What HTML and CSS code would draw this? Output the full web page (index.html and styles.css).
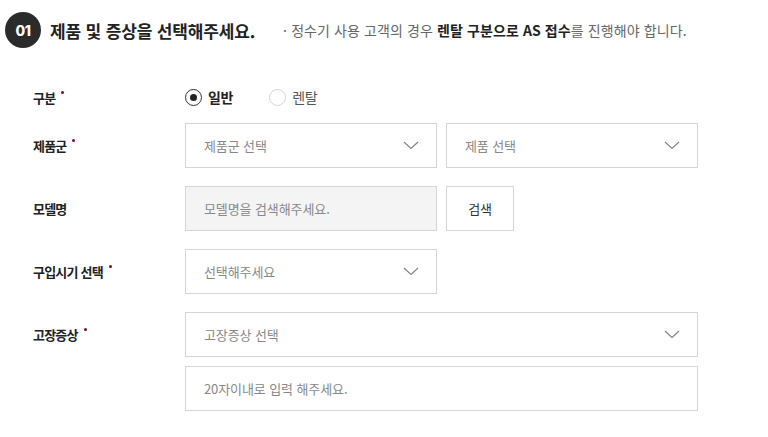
FILE: index.html
```html
<!DOCTYPE html>
<html lang="ko">
<head>
<meta charset="utf-8">
<title>제품 및 증상 선택</title>
<link rel="stylesheet" href="styles.css">
</head>
<body>
<div class="page">
  <div class="head">
    <span class="badge">01</span>
    <h2 class="title">제품 및 증상을 선택해주세요.</h2>
    <p class="note">· 정수기 사용 고객의 경우 <b>렌탈 구분으로 AS 접수</b>를 진행해야 합니다.</p>
  </div>

  <div class="form">
    <div class="row row-radio">
      <div class="label">구분<span class="req"></span></div>
      <div class="fields">
        <label class="radio on"><span class="dot"></span>일반</label>
        <label class="radio"><span class="dot"></span>렌탈</label>
      </div>
    </div>

    <div class="row">
      <div class="label">제품군<span class="req"></span></div>
      <div class="fields">
        <div class="select">제품군 선택<svg class="chev" width="16" height="9" viewBox="0 0 16 9"><polyline points="1,1 8,7.5 15,1" fill="none" stroke="#808080" stroke-width="1.1"/></svg></div>
        <div class="select">제품 선택<svg class="chev" width="16" height="9" viewBox="0 0 16 9"><polyline points="1,1 8,7.5 15,1" fill="none" stroke="#808080" stroke-width="1.1"/></svg></div>
      </div>
    </div>

    <div class="row">
      <div class="label">모델명</div>
      <div class="fields">
        <div class="select input-gray">모델명을 검색해주세요.</div>
        <div class="btn">검색</div>
      </div>
    </div>

    <div class="row">
      <div class="label">구입시기 선택<span class="req"></span></div>
      <div class="fields">
        <div class="select">선택해주세요<svg class="chev" width="16" height="9" viewBox="0 0 16 9"><polyline points="1,1 8,7.5 15,1" fill="none" stroke="#808080" stroke-width="1.1"/></svg></div>
      </div>
    </div>

    <div class="row row-top">
      <div class="label">고장증상<span class="req"></span></div>
      <div class="fields col">
        <div class="select wide">고장증상 선택<svg class="chev" width="16" height="9" viewBox="0 0 16 9"><polyline points="1,1 8,7.5 15,1" fill="none" stroke="#808080" stroke-width="1.1"/></svg></div>
        <div class="select wide">20자이내로 입력 해주세요.</div>
      </div>
    </div>
  </div>
</div>
</body>
</html>
```

FILE: styles.css
```css
* { box-sizing: border-box; }
html, body { margin: 0; padding: 0; background: #fff; }
body {
  font-family: "Noto Sans CJK KR", "Noto Sans", sans-serif;
  color: #222;
}
.page { width: 768px; height: 437px; overflow: hidden; }

.head {
  display: flex;
  align-items: center;
  height: 60px;
  padding: 0 0 0 5px;
}
.badge {
  width: 36px; height: 36px;
  border-radius: 50%;
  background: #2b2b2b;
  color: #fff;
  font-family: "Inter", "Noto Sans", sans-serif;
  font-weight: 800;
  font-size: 14px;
  letter-spacing: -0.5px;
  display: flex; align-items: center; justify-content: center;
}
.title {
  margin: 0 0 0 9px;
  font-size: 17px;
  font-weight: 700;
  letter-spacing: -0.15px;
  color: #222;
}
.note {
  margin: 0 0 0 28px;
  font-size: 14px;
  letter-spacing: 0.1px;
  color: #666;
}
.note b { color: #222; font-weight: 700; }

.form {
  padding: 27px 0 0 33px;
  display: flex;
  flex-direction: column;
  gap: 18px;
}
.row {
  display: flex;
  align-items: center;
}
.row-radio { height: 20px; margin-bottom: -2px; }
.row-top { align-items: flex-start; }
.row-top .label { padding-top: 13px; }
.label {
  width: 152px;
  font-size: 13px;
  line-height: 19px;
  font-weight: 700;
  letter-spacing: -0.8px;
  color: #222;
}
.req {
  display: inline-block;
  width: 3px; height: 3px;
  border-radius: 50%;
  background: #7d0a1f;
  vertical-align: top;
  margin: 3px 0 0 6px;
}
.fields { display: flex; gap: 9px; align-items: center; }
.fields.col { flex-direction: column; gap: 9px; align-items: flex-start; }

.radio {
  display: flex; align-items: center;
  font-size: 14px;
  letter-spacing: -0.3px;
  color: #555;
}
.radio.on { color: #222; font-weight: 700; margin-right: 27px; }
.radio .dot {
  width: 17px; height: 17px;
  border-radius: 50%;
  border: 1px solid #d6d6d6;
  margin-right: 6px;
  position: relative;
}
.radio.on .dot { border: 1.5px solid #333; }
.radio.on .dot::after {
  content: "";
  position: absolute;
  left: 50%; top: 50%;
  width: 7px; height: 7px;
  margin: -3.5px 0 0 -3.5px;
  border-radius: 50%;
  background: #222;
}

.select {
  width: 252px;
  height: 45px;
  border: 1px solid #d5d5d5;
  background: #fff;
  display: flex;
  align-items: center;
  justify-content: space-between;
  padding: 0 17px 0 18px;
  font-size: 13px;
  letter-spacing: -0.1px;
  color: #888;
}
.select.wide { width: 513px; }
.input-gray { background: #f4f4f4; }
.chev { flex: none; }
.btn {
  width: 68px; height: 45px;
  border: 1px solid #d5d5d5;
  display: flex; align-items: center; justify-content: center;
  font-size: 13px;
  color: #333;
  letter-spacing: -0.3px;
}
```
